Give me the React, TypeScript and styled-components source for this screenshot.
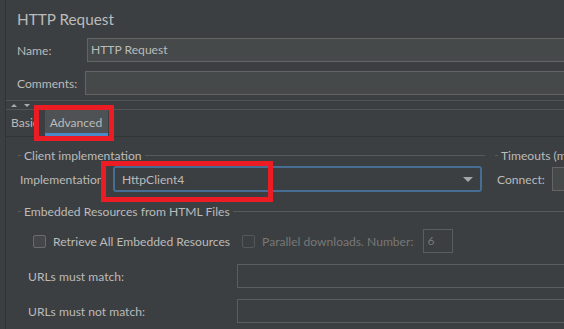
import styled, { createGlobalStyle } from "styled-components";

const GlobalStyle = createGlobalStyle`
  html, body {
    margin: 0;
    padding: 0;
    background: #3c3f41;
    overflow: hidden;
  }
  body {
    font-family: Lato, "Liberation Sans", sans-serif;
    font-size: 12.1px;
    color: #bbbbbb;
  }
  * {
    box-sizing: border-box;
  }
`;

const Page = styled.div`
  width: 564px;
  height: 329px;
  overflow: hidden;
  padding-left: 5px;
`;

const Panel = styled.div`
  position: relative;
  width: 720px;
  height: 329px;
  border-left: 1px solid #313335;
`;

const Header = styled.div`
  padding: 0 0 5px 11px;
`;

const Title = styled.div`
  height: 38px;
  line-height: 38px;
  font-size: 15.3px;
`;

const FieldRow = styled.div<{ $gap?: number }>`
  display: flex;
  align-items: center;
  height: 24px;
  margin-top: ${({ $gap }) => $gap ?? 0}px;
`;

const RowLabel = styled.div<{ $width: number; $indent?: number }>`
  width: ${({ $width }) => $width}px;
  padding-left: ${({ $indent }) => $indent ?? 0}px;
  flex-shrink: 0;
  white-space: nowrap;
`;

const TextField = styled.div<{ $dim?: boolean }>`
  flex: 1;
  height: 24px;
  line-height: 22px;
  padding-left: 3px;
  border: 1px solid ${({ $dim }) => ($dim ? "#5b5e60" : "#646464")};
  background: ${({ $dim }) => ($dim ? "#3c3f41" : "#45494a")};
`;

const SplitDivider = styled.div`
  display: flex;
  align-items: center;
  gap: 7px;
  height: 10px;
  padding-left: 5px;
  border-top: 1px solid #515456;
  border-bottom: 1px solid #515456;
`;

const Arrow = styled.span<{ $down?: boolean }>`
  width: 0;
  height: 0;
  border-left: 3px solid transparent;
  border-right: 3px solid transparent;
  ${({ $down }) =>
    $down ? "border-top: 3px solid #a9acaf;" : "border-bottom: 3px solid #a9acaf;"}
`;

const TabBar = styled.div`
  display: flex;
  height: 27px;
  border-bottom: 1px solid #323436;
`;

const Tab = styled.div<{ $active?: boolean }>`
  height: 26px;
  line-height: 26px;
  padding: 0 6px 0 5px;
  background: ${({ $active }) => ($active ? "#4e5254" : "transparent")};
  box-shadow: ${({ $active }) => ($active ? "inset 0 -3px 0 #4a88c7" : "none")};
`;

const TabContent = styled.div`
  padding: 10px 0 0 12px;
`;

const GroupRow = styled.div`
  display: flex;
  gap: 10px;
`;

const Group = styled.div<{ $width?: number; $gap?: number }>`
  width: ${({ $width }) => ($width ? `${$width}px` : "auto")};
  flex: ${({ $width }) => ($width ? "none" : "1")};
  margin-top: ${({ $gap }) => $gap ?? 0}px;
`;

const GroupTitle = styled.div`
  display: flex;
  align-items: center;
  gap: 3px;
  height: 16px;
  white-space: nowrap;

  &::before {
    content: "";
    width: 3px;
    height: 1px;
    background: #57595b;
  }

  &::after {
    content: "";
    flex: 1;
    height: 1px;
    background: #57595b;
  }
`;

const ImplRow = styled.div`
  display: flex;
  align-items: center;
  height: 26px;
  margin-top: 3px;
  padding: 0 3px 0 2px;
`;

const Combo = styled.div`
  flex: 1;
  display: flex;
  align-items: center;
  justify-content: space-between;
  height: 26px;
  padding: 0 7px 0 7px;
  border: 2px solid #466d94;
  border-radius: 3px;
  background: #3c3f41;
`;

const ComboArrow = styled.span`
  width: 0;
  height: 0;
  border-left: 5px solid transparent;
  border-right: 5px solid transparent;
  border-top: 5px solid #a4a7aa;
`;

const CheckRow = styled.div`
  display: flex;
  align-items: center;
  height: 24px;
  margin-top: 10px;
  padding-left: 15px;
`;

const CheckBox = styled.span<{ $disabled?: boolean; $gap?: number }>`
  width: 13px;
  height: 13px;
  margin-left: ${({ $gap }) => $gap ?? 0}px;
  border: 1px solid ${({ $disabled }) => ($disabled ? "#55585a" : "#6b6b6b")};
  border-radius: 2px;
  background: ${({ $disabled }) => ($disabled ? "#3c3f41" : "#43474a")};
`;

const CheckLabel = styled.span<{ $disabled?: boolean }>`
  margin-left: 7px;
  white-space: nowrap;
  color: ${({ $disabled }) => ($disabled ? "#787878" : "#bbbbbb")};
`;

const NumberField = styled.div`
  width: 30px;
  height: 24px;
  line-height: 22px;
  margin-left: 10px;
  padding-left: 3px;
  border: 1px solid #5b5e60;
  color: #787878;
`;

const UrlRow = styled.div<{ $gap: number }>`
  display: flex;
  align-items: center;
  height: 24px;
  margin-top: ${({ $gap }) => $gap}px;
`;

const Highlight = styled.div<{ $x: number; $y: number; $w: number; $h: number }>`
  position: absolute;
  left: ${({ $x }) => $x}px;
  top: ${({ $y }) => $y}px;
  width: ${({ $w }) => $w}px;
  height: ${({ $h }) => $h}px;
  border: 5px solid #ec1c24;
  z-index: 2;
`;

export default function App() {
  return (
    <>
      <GlobalStyle />
      <Page>
        <Panel>
          <Header>
            <Title>HTTP Request</Title>
            <FieldRow>
              <RowLabel $width={70}>Name:</RowLabel>
              <TextField>HTTP Request</TextField>
            </FieldRow>
            <FieldRow $gap={9}>
              <RowLabel $width={68}>Comments:</RowLabel>
              <TextField />
            </FieldRow>
          </Header>

          <SplitDivider>
            <Arrow />
            <Arrow $down />
          </SplitDivider>

          <TabBar>
            <Tab>Basic</Tab>
            <Tab $active>Advanced</Tab>
          </TabBar>

          <TabContent>
            <GroupRow>
              <Group $width={467}>
                <GroupTitle>Client implementation</GroupTitle>
                <ImplRow>
                  <RowLabel $width={93}>Implementation:</RowLabel>
                  <Combo>
                    <span>HttpClient4</span>
                    <ComboArrow />
                  </Combo>
                </ImplRow>
              </Group>
              <Group>
                <GroupTitle>Timeouts (milliseconds)</GroupTitle>
                <ImplRow>
                  <RowLabel $width={55}>Connect:</RowLabel>
                  <TextField />
                </ImplRow>
              </Group>
            </GroupRow>

            <Group $gap={11}>
              <GroupTitle>Embedded Resources from HTML Files</GroupTitle>
              <CheckRow>
                <CheckBox />
                <CheckLabel>Retrieve All Embedded Resources</CheckLabel>
                <CheckBox $disabled $gap={12} />
                <CheckLabel $disabled>Parallel downloads. Number:</CheckLabel>
                <NumberField>6</NumberField>
              </CheckRow>
              <UrlRow $gap={11}>
                <RowLabel $width={219} $indent={10}>URLs must match:</RowLabel>
                <TextField $dim />
              </UrlRow>
              <UrlRow $gap={11}>
                <RowLabel $width={219} $indent={10}>URLs must not match:</RowLabel>
                <TextField $dim />
              </UrlRow>
            </Group>
          </TabContent>

          <Highlight $x={28} $y={105} $w={80} $h={36} />
          <Highlight $x={95} $y={161} $w={172} $h={41} />
        </Panel>
      </Page>
    </>
  );
}
